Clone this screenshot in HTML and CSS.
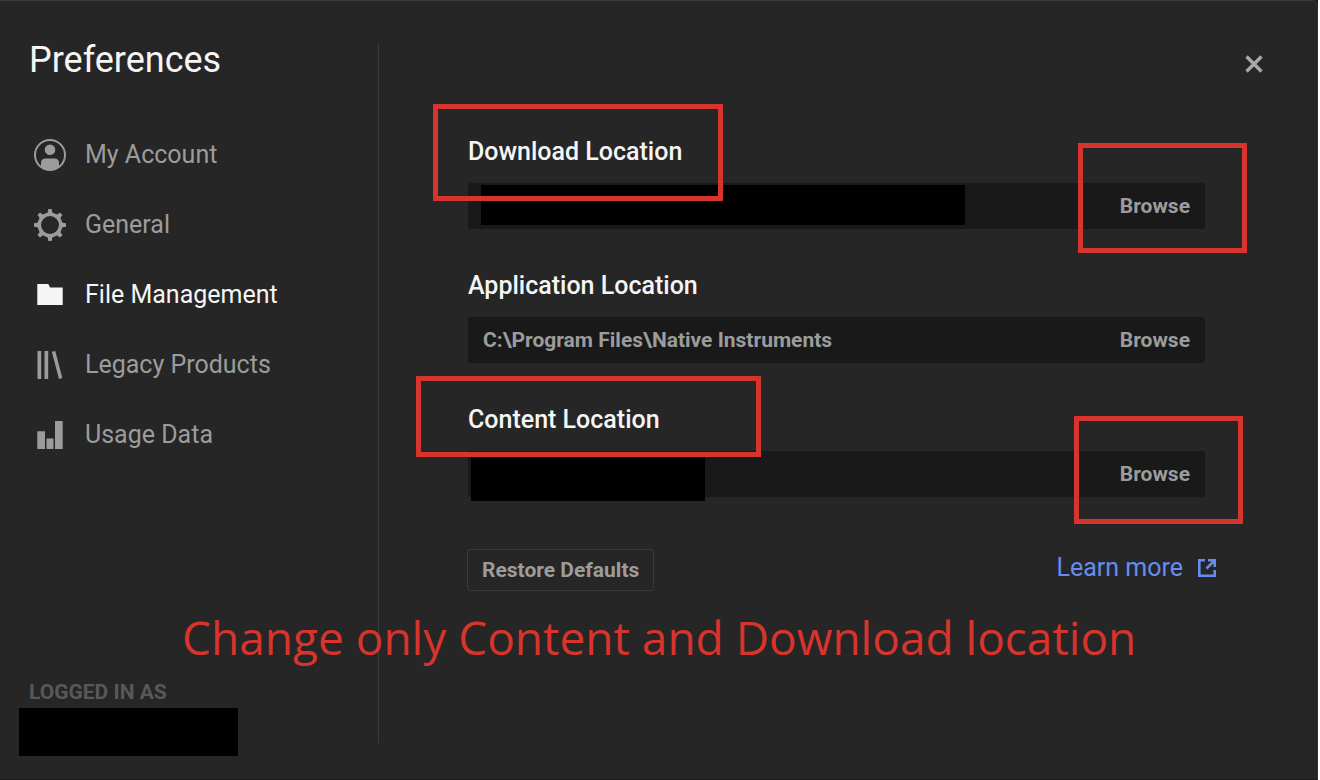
FILE: index.html
```html
<!DOCTYPE html>
<html lang="en">
<head>
    <meta charset="UTF-8">
    <meta name="viewport" content="width=device-width, initial-scale=1.0">
    <title>Preferences</title>
    <link rel="stylesheet" href="styles.css">
</head>
<body>
    <div class="dialog">
        <aside class="sidebar">
            <h1>Preferences</h1>
            <nav class="menu">
                <a href="#account">
                    <svg viewBox="0 0 32 32" width="32" height="32" aria-hidden="true">
                        <circle cx="16" cy="16" r="15" fill="none" stroke="currentColor" stroke-width="2"/>
                        <circle cx="16" cy="10.700" r="5.300" fill="currentColor"/>
                        <path d="M7 28V24Q7 19.500 11.500 19.500H20.500Q25 19.500 25 24V28A15 15 0 0 1 7 28Z" fill="currentColor"/>
                    </svg>
                    My Account
                </a>
                <a href="#general">
                    <svg viewBox="0 0 32 32" width="32" height="32" aria-hidden="true">
                        <circle cx="16" cy="16" r="10.700" fill="none" stroke="currentColor" stroke-width="3.400"/>
                        <g fill="currentColor">
                            <path id="tooth" d="M12 5.500Q14 4 14 2V1Q14 0 15 0H17Q18 0 18 1V2Q18 4 20 5.500Z"/>
                            <use href="#tooth" transform="rotate(45 16 16)"/>
                            <use href="#tooth" transform="rotate(90 16 16)"/>
                            <use href="#tooth" transform="rotate(135 16 16)"/>
                            <use href="#tooth" transform="rotate(180 16 16)"/>
                            <use href="#tooth" transform="rotate(225 16 16)"/>
                            <use href="#tooth" transform="rotate(270 16 16)"/>
                            <use href="#tooth" transform="rotate(315 16 16)"/>
                        </g>
                    </svg>
                    General
                </a>
                <a href="#files" class="active" aria-current="page">
                    <svg viewBox="0 0 32 32" width="32" height="32" fill="currentColor" aria-hidden="true">
                        <path d="M3.300 5H13.700Q14.600 5 15 6.200L16 8.500H28.700V26H3.300Z"/>
                    </svg>
                    File Management
                </a>
                <a href="#legacy">
                    <svg viewBox="0 0 32 32" width="32" height="32" fill="currentColor" aria-hidden="true">
                        <path d="M3.500 2H7.200V30H3.500ZM10.500 2H14.200V30H10.500ZM17.800 2.800L21.300 2L28.300 29L25 30Z"/>
                    </svg>
                    Legacy Products
                </a>
                <a href="#usage">
                    <svg viewBox="0 0 32 32" width="32" height="32" fill="currentColor" aria-hidden="true">
                        <path d="M3.300 12.300H11V30H3.300ZM12.500 19.500H19.500V30H12.500ZM21 2H28.700V30H21Z"/>
                    </svg>
                    Usage Data
                </a>
            </nav>
            <div class="login">
                <p>Logged in as</p>
                <div class="user"></div>
            </div>
        </aside>
        <div class="divider"></div>
        <main class="content">
            <button class="close" type="button" aria-label="Close">
                <svg viewBox="0 0 18 18" width="18" height="18" aria-hidden="true">
                    <path d="M1.500 1.500L16.500 16.500M16.500 1.500L1.500 16.500" stroke="currentColor" stroke-width="3.400"/>
                </svg>
            </button>
            <form>
                <div class="location">
                    <label for="download">Download Location</label>
                    <div class="field">
                        <input type="text" id="download" readonly>
                        <button type="button">Browse</button>
                        <div class="cover cover-download"></div>
                        <div class="mark mark-browse-download"></div>
                    </div>
                    <div class="mark mark-download"></div>
                </div>
                <div class="location">
                    <label for="application">Application Location</label>
                    <div class="field">
                        <input type="text" id="application" value="C:\Program Files\Native Instruments" readonly>
                        <button type="button">Browse</button>
                    </div>
                </div>
                <div class="location">
                    <label for="content">Content Location</label>
                    <div class="field">
                        <input type="text" id="content" readonly>
                        <button type="button">Browse</button>
                        <div class="cover cover-content"></div>
                        <div class="mark mark-browse-content"></div>
                    </div>
                    <div class="mark mark-content"></div>
                </div>
                <div class="actions">
                    <button class="restore" type="button">Restore Defaults</button>
                    <a class="learn" href="#learn">
                        Learn more
                        <svg viewBox="0 0 20 20" width="20" height="20" fill="none" stroke="currentColor" stroke-width="2.600" aria-hidden="true">
                            <path d="M8 2.300H2.300V17.700H17.700V12"/>
                            <path d="M11 2.300H17.700V9M17.700 2.300L9.500 10.500"/>
                        </svg>
                    </a>
                </div>
            </form>
        </main>
        <p class="note">Change only Content and Download location</p>
    </div>
</body>
</html>
```
FILE: styles.css
```css
* {
    box-sizing: border-box;
}
html {
    background-color: #fff;
}
body {
    margin: 0 2px 0 0;
    background-color: #1c1c4c;
    font-family: Roboto, sans-serif;
    color: #f5f5f5;
}
h1, p {
    margin: 0;
}
button {
    background: none;
    border: none;
    padding: 0;
    font-family: inherit;
    color: #9c9c9c;
    cursor: pointer;
}
svg {
    display: block;
    flex: none;
}
.dialog {
    position: relative;
    display: flex;
    min-height: 100vh;
    background-color: #262626;
    border-top: 1px solid #3a3a3a;
    border-right: 1px solid #333;
    border-bottom: 1px solid #1c1c1c;
    border-top-right-radius: 6px;
}

/* sidebar */
.sidebar {
    display: flex;
    flex-direction: column;
    width: 378px;
    padding: 38px 19px 23px;
}
.sidebar h1 {
    padding-left: 10px;
    font-size: 36px;
    font-weight: 400;
    line-height: 42px;
}
.menu {
    display: flex;
    flex-direction: column;
    gap: 38px;
    margin-top: 58px;
    padding-left: 15px;
}
.menu a {
    display: flex;
    align-items: center;
    gap: 19px;
    font-size: 25px;
    line-height: 32px;
    color: #9c9c9c;
    text-decoration: none;
}
.menu a.active {
    color: #f5f5f5;
}
.login {
    margin-top: auto;
}
.login p {
    padding-left: 10px;
    margin-bottom: 4px;
    font-size: 21px;
    font-weight: 700;
    line-height: 24px;
    text-transform: uppercase;
    color: #585858;
}
.user {
    width: 219px;
    height: 48px;
    background-color: #000;
}
.divider {
    width: 1px;
    margin: 42px 0 36px;
    background-color: #3a3a3a;
}

/* file locations */
.content {
    display: flex;
    flex-direction: column;
    flex: 1;
    padding: 54px 54px 36px 89px;
}
.close {
    align-self: flex-end;
    color: #a8a8a8;
}
form {
    display: flex;
    flex-direction: column;
    gap: 41px;
    margin-top: 63px;
    margin-right: 58px;
}
.location {
    position: relative;
    display: flex;
    flex-direction: column;
    gap: 15px;
}
.location label {
    font-size: 25px;
    font-weight: 500;
    line-height: 32px;
}
.field {
    position: relative;
    display: flex;
    height: 46px;
    padding: 0 15px;
    border-radius: 3px;
    background-color: #191919;
}
.field input {
    flex: 1;
    min-width: 0;
    padding: 0;
    border: none;
    outline: none;
    background: none;
    font-family: inherit;
    font-size: 21px;
    font-weight: 700;
    color: #9c9c9c;
}
.field button, .restore {
    font-size: 21px;
    font-weight: 700;
}
.cover {
    position: absolute;
    background-color: #000;
}
.cover-download {
    top: 2px;
    left: 13px;
    width: 484px;
    height: 40px;
}
.cover-content {
    top: 5px;
    left: 3px;
    width: 234px;
    height: 45px;
}
.actions {
    display: flex;
    align-items: center;
    justify-content: space-between;
    margin: 11px -12px 0 -1px;
}
.restore {
    height: 42px;
    padding: 0 14px;
    border: 1px solid #3a3a3a;
    border-radius: 3px;
}
.learn {
    display: flex;
    align-items: center;
    gap: 14px;
    padding-bottom: 4px;
    font-size: 25px;
    line-height: 30px;
    color: #668cf0;
    text-decoration: none;
}

/* red annotations */
.mark {
    position: absolute;
    border: 5px solid #d6342c;
    pointer-events: none;
}
.mark-download {
    top: -32px;
    left: -35px;
    width: 290px;
    height: 97px;
}
.mark-content {
    top: -28px;
    left: -52px;
    width: 345px;
    height: 81px;
}
.mark-browse-download {
    top: -40px;
    right: -42px;
    width: 169px;
    height: 110px;
}
.mark-browse-content {
    top: -35px;
    right: -38px;
    width: 169px;
    height: 108px;
}
.note {
    position: absolute;
    top: 604px;
    left: 182px;
    font-family: "Open Sans", sans-serif;
    font-size: 46px;
    line-height: 64px;
    white-space: nowrap;
    color: #d6342c;
}
```
